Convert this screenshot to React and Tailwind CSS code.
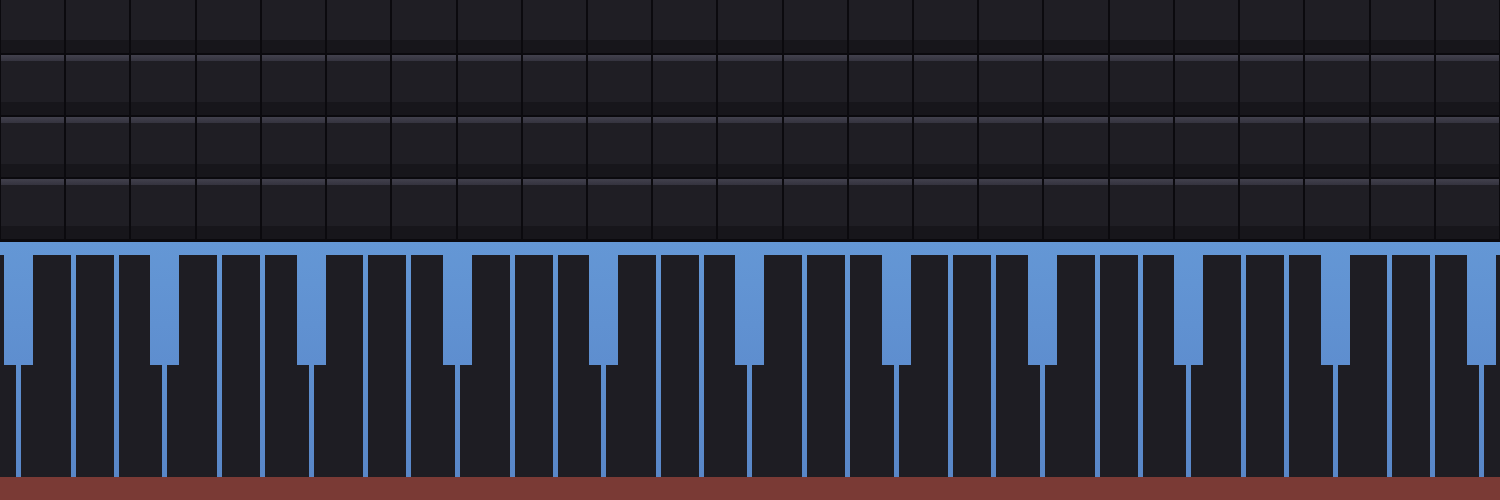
// App.jsx
import React from "react";

const COLS = 23;
const ROWS = 4;

// keys per octave-ish group (widths between the blue seams, minus the 5px seam)
const buildKeys = () => {
  const keys = [{ w: "w-[16px]", black: false }];
  for (let k = 0; k < 10; k++) {
    keys.push({ w: "w-[49.7px]", black: true });
    keys.push({ w: "w-[38px]", black: false });
    keys.push({ w: "w-[43.6px]", black: false });
  }
  keys.push({ w: "w-[16px]", black: true });
  return keys;
};

const Pad = () => (
  <div className="flex h-[62px] flex-col pt-[2px]">
    <div className="h-[6px] bg-gradient-to-b from-[#42414d] to-[#34333e]" />
    <div className="flex-1 bg-[#1f1e24]" />
    <div className="h-[13px] bg-[#17161b]" />
  </div>
);

const PadGrid = () => (
  <div className="flex h-[242px] flex-col justify-end overflow-hidden bg-[#0b0a0e] pb-[3px]">
    {Array.from({ length: ROWS }).map((_, r) => (
      <div
        key={r}
        className="grid shrink-0 grid-cols-[repeat(23,minmax(0,1fr))] gap-x-[2px] px-[1px]"
      >
        {Array.from({ length: COLS }).map((_, c) => (
          <Pad key={c} />
        ))}
      </div>
    ))}
  </div>
);

const Keyboard = () => {
  const keys = buildKeys();
  return (
    <div className="h-[235px] overflow-hidden bg-gradient-to-b from-[#6497d5] to-[#5987c8] pt-[13px]">
      <div className="flex h-full gap-x-[5px]">
        {keys.map((k, i) => (
          <div key={i} className={`relative h-full shrink-0 bg-[#1e1d23] ${k.w}`}>
            {k.black && (
              <div className="absolute -left-[17px] -top-[13px] h-[123px] w-[29px] bg-gradient-to-b from-[#6497d5] to-[#5e8ecf]" />
            )}
          </div>
        ))}
      </div>
    </div>
  );
};

export default function App() {
  return (
    <div className="h-[500px] w-[1500px] overflow-hidden bg-[#0b0a0e]">
      <PadGrid />
      <Keyboard />
      <div className="h-[23px] bg-[#7a3a35]" />
    </div>
  );
}
